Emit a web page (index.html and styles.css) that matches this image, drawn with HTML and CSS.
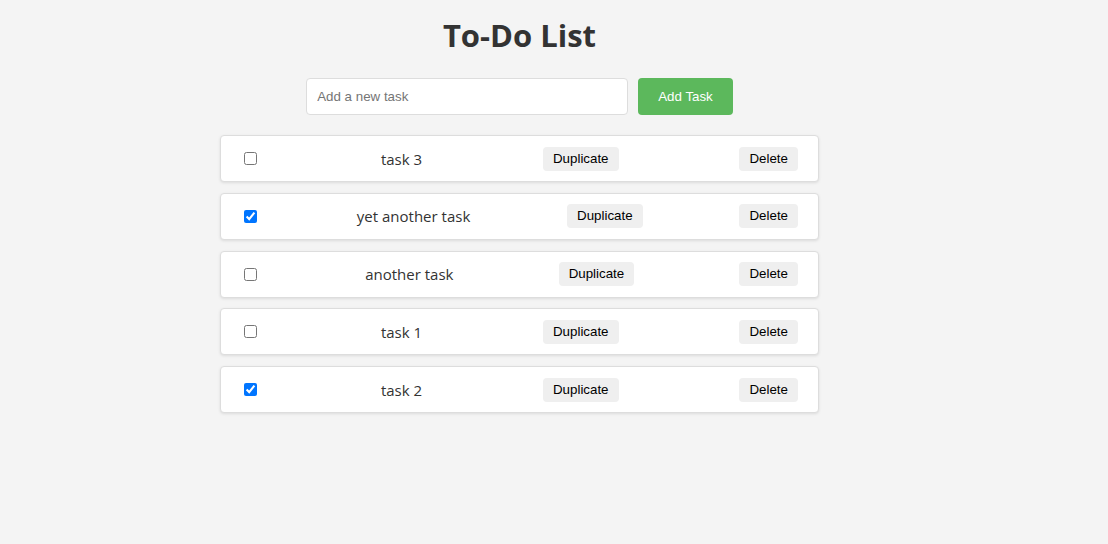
FILE: index.html
```html
<!DOCTYPE html>
<html lang="en">
<head>
<meta charset="utf-8">
<title>To-Do List</title>
<link rel="stylesheet" href="styles.css">
</head>
<body>
<div class="app">
  <h1 class="title">To-Do List</h1>
  <div class="add-row">
    <input class="task-input" type="text" placeholder="Add a new task">
    <button class="add-btn">Add Task</button>
  </div>
  <ul class="task-list">
    <li class="task-item">
      <input type="checkbox" class="task-check">
      <span class="task-text">task 3</span>
      <button class="btn">Duplicate</button>
      <button class="btn">Delete</button>
    </li>
    <li class="task-item">
      <input type="checkbox" class="task-check" checked>
      <span class="task-text">yet another task</span>
      <button class="btn">Duplicate</button>
      <button class="btn">Delete</button>
    </li>
    <li class="task-item">
      <input type="checkbox" class="task-check">
      <span class="task-text">another task</span>
      <button class="btn">Duplicate</button>
      <button class="btn">Delete</button>
    </li>
    <li class="task-item">
      <input type="checkbox" class="task-check">
      <span class="task-text">task 1</span>
      <button class="btn">Duplicate</button>
      <button class="btn">Delete</button>
    </li>
    <li class="task-item">
      <input type="checkbox" class="task-check" checked>
      <span class="task-text">task 2</span>
      <button class="btn">Duplicate</button>
      <button class="btn">Delete</button>
    </li>
  </ul>
</div>
</body>
</html>
```
FILE: styles.css
```css
html, body {
  margin: 0;
  padding: 0;
}
body {
  background: #f4f4f4;
  font-family: "Open Sans", "Noto Sans", sans-serif;
  color: #333;
}
.app {
  width: 1039px;
  display: flex;
  flex-direction: column;
  align-items: center;
}
.title {
  font-size: 31px;
  font-weight: 700;
  margin: 14px 0 22px;
  line-height: 42px;
  color: #333;
}
.add-row {
  display: flex;
  gap: 10px;
  margin-bottom: 20px;
}
.task-input {
  width: 300px;
  padding: 10px;
  border: 1px solid #ddd;
  border-radius: 4px;
  font-family: "Liberation Sans", Arial, sans-serif;
  font-size: 13.33px;
  height: 15px;
  outline: none;
  background: #fff;
}
.task-input::placeholder {
  color: #757575;
}
.add-btn {
  padding: 10px 20px;
  background: #5cb85c;
  color: #fff;
  border: none;
  border-radius: 4px;
  font-family: "Liberation Sans", Arial, sans-serif;
  font-size: 13.33px;
  height: 37px;
}
.task-list {
  list-style: none;
  margin: 0;
  padding: 0;
  width: 599px;
}
.task-item {
  box-sizing: border-box;
  display: flex;
  justify-content: space-between;
  align-items: center;
  height: 47px;
  padding: 0 20px 0 19px;
  margin-bottom: 10.75px;
  background: #fff;
  border: 1px solid #ddd;
  border-radius: 4px;
  box-shadow: 0 1px 3px rgba(0,0,0,0.1);
}
.task-check {
  margin: 3px 3px 3px 4px;
  width: 13px;
  height: 13px;
}
.task-text {
  font-size: 15px;
}
.btn {
  padding: 5px 10px;
  background: #efefef;
  color: #000;
  border: none;
  border-radius: 4px;
  font-family: "Liberation Sans", Arial, sans-serif;
  font-size: 13.33px;
  line-height: 14px;
}
```
